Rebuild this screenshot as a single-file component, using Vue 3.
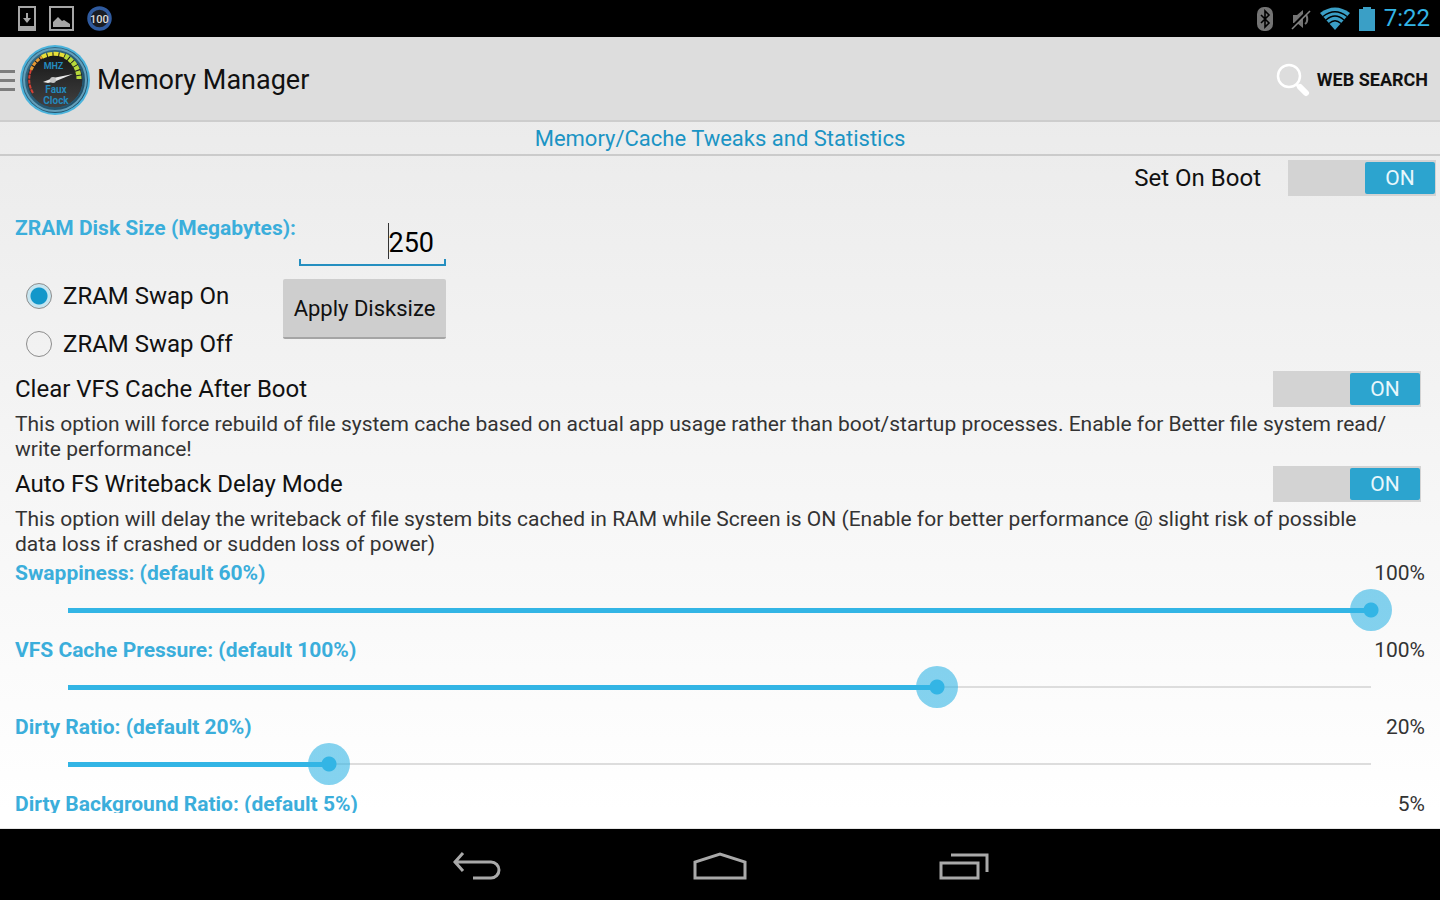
<script setup>
import { ref } from 'vue'

const setOnBoot = ref(true)
const diskSize = ref('250')
const zramSwap = ref('on')

// \u200b lets "read/write" break after the slash
const options = ref([
  {
    id: 'vfs-cache',
    title: 'Clear VFS Cache After Boot',
    enabled: true,
    text: 'This option will force rebuild of file system cache based on actual app usage rather than boot/startup processes. Enable for Better file system read/\u200bwrite performance!'
  },
  {
    id: 'writeback',
    title: 'Auto FS Writeback Delay Mode',
    enabled: true,
    text: 'This option will delay the writeback of file system bits cached in RAM while Screen is ON (Enable for better performance @ slight risk of possible data loss if crashed or sudden loss of power)'
  }
])

const sliders = ref([
  { id: 'swappiness', label: 'Swappiness: (default 60%)', value: 100, max: 100 },
  { id: 'pressure', label: 'VFS Cache Pressure: (default 100%)', value: 100, max: 150 },
  { id: 'dirty', label: 'Dirty Ratio: (default 20%)', value: 20, max: 100 }
])

// Fraction of the track that is filled, 0 to 1
const fillOf = (slider) => slider.value / slider.max
</script>

<template>
  <div class="screen">
    <header class="status-bar">
      <div class="status-group">
        <svg width="18" height="26" viewBox="0 0 18 26" fill="none" stroke="#a6a6a6">
          <path d="M1 1h16v23H1z" stroke-width="2" />
          <path d="M1 20h16v5H1z" fill="#a6a6a6" stroke="none" />
          <path d="M9 7v8" stroke-width="2" />
          <path d="M5 12h8l-4 5z" fill="#a6a6a6" stroke="none" />
        </svg>
        <svg width="25" height="25" viewBox="0 0 25 25">
          <path d="M1 1h23v23H1z" fill="none" stroke="#a6a6a6" stroke-width="2" />
          <path d="M4 21v-5l5-5 4 4 2-1 6 4v3z" fill="#a6a6a6" />
        </svg>
        <svg width="25" height="25" viewBox="0 0 25 25">
          <circle cx="12.5" cy="12.5" r="10.5" fill="#1a1d24" stroke="#2f5a9e" stroke-width="3.5" />
          <text x="12.5" y="17" class="battery-count">100</text>
        </svg>
      </div>
      <div class="status-group right">
        <svg class="bluetooth" width="16" height="24" viewBox="0 0 16 24">
          <rect width="16" height="24" rx="7" fill="#747474" />
          <path d="M4 8l8 8-4 4V4l4 4-8 8" fill="none" stroke="#000" stroke-width="1.6" />
        </svg>
        <svg width="20" height="22" viewBox="0 0 20 22">
          <path d="M2 7h4l6-5v18l-6-5H2z" fill="#747474" />
          <path d="M14 6c3 2 3 8 0 10" fill="none" stroke="#747474" stroke-width="2" />
          <path d="M0 20L17 3" stroke="#000" stroke-width="3" />
          <path d="M1 21L19 3" stroke="#858585" stroke-width="1.6" />
        </svg>
        <svg width="30" height="23" viewBox="0 0 30 23">
          <path d="M0 6Q15-5 30 6L15 23z" fill="#3a9fc6" />
          <path d="M3 9.500Q15 0 27 9.500M6 13Q15 5 24 13M9 16.500Q15 11 21 16.500" fill="none" stroke="#000" stroke-width="1.300" />
        </svg>
        <svg width="16" height="24" viewBox="0 0 16 24">
          <path d="M4 0h8v2h4v22H0V2h4z" fill="#3a9fc6" />
        </svg>
        <span class="clock">7:22</span>
      </div>
    </header>

    <div class="action-bar">
      <button class="home" aria-label="Open menu">
        <svg width="15" height="24" viewBox="0 0 15 24" stroke="#7d7d7d" stroke-width="3">
          <path d="M0 3.500h15M0 12.500h15M0 21.500h15" />
        </svg>
        <svg width="72" height="72" viewBox="0 0 72 72">
          <defs>
            <linearGradient id="dial" x1="0" y1="0" x2="0" y2="1">
              <stop offset="0" stop-color="#151515" />
              <stop offset="1" stop-color="#414141" />
            </linearGradient>
            <linearGradient id="rim" x1="0" y1="0" x2="1" y2="1">
              <stop offset="0" stop-color="#37708c" />
              <stop offset="1" stop-color="#1d4a62" />
            </linearGradient>
          </defs>
          <circle cx="36" cy="36" r="35" fill="#4ab3dc" />
          <circle cx="36" cy="36" r="33" fill="url(#rim)" />
          <circle cx="36" cy="36" r="31" fill="none" stroke="#639fba" stroke-width="2" />
          <circle cx="36" cy="36" r="28" fill="url(#dial)" stroke="#245c78" />
          <path d="M14 49A26 26 0 0 1 12 26" fill="none" stroke="#d44135" stroke-width="2" stroke-dasharray="4 1" />
          <path d="M12 26A26 26 0 0 1 23 13" fill="none" stroke="#e59835" stroke-width="3" stroke-dasharray="4 1" />
          <path d="M23 13A26 26 0 0 1 46 12" fill="none" stroke="#e8df38" stroke-width="4" stroke-dasharray="5 1" />
          <path d="M46 12A26 26 0 0 1 60 35" fill="none" stroke="#b7d93c" stroke-width="5" stroke-dasharray="4 1" />
          <text x="34.500" y="25" class="logo-unit">MHZ</text>
          <text x="37" y="49" class="logo-name">Faux</text>
          <text x="37" y="60" class="logo-name">Clock</text>
          <path d="M24 38l10-4 20-4-17 7-8 2z" fill="#e9e9e9" />
          <circle cx="34" cy="36" r="3" fill="#c4c4c4" />
        </svg>
      </button>
      <h1>Memory Manager</h1>
      <button class="web-search">
        <svg width="34" height="34" viewBox="0 0 34 34" fill="none" stroke="#fff">
          <circle cx="13" cy="13" r="11" stroke-width="2.500" />
          <path d="M20 21l3 3" stroke-width="3" />
          <path d="M24 24l6 6" stroke-width="6" stroke-linecap="round" />
        </svg>
        Web Search
      </button>
    </div>

    <h2>Memory/Cache Tweaks and Statistics</h2>

    <main>
      <div class="content">
        <div class="boot-row">
          <label for="set-on-boot">Set On Boot</label>
          <span class="switch">
            <input id="set-on-boot" v-model="setOnBoot" type="checkbox" role="switch">
            <span class="switch-text">{{ setOnBoot ? 'ON' : 'OFF' }}</span>
          </span>
        </div>

        <section class="zram">
          <div class="disk-size">
            <label class="caption" for="disk-size">ZRAM Disk Size (Megabytes):</label>
            <input id="disk-size" v-model="diskSize" type="text" inputmode="numeric">
          </div>
          <div class="swap">
            <div class="radios">
              <label><input v-model="zramSwap" type="radio" name="zram" value="on">ZRAM Swap On</label>
              <label><input v-model="zramSwap" type="radio" name="zram" value="off">ZRAM Swap Off</label>
            </div>
            <button class="apply">Apply Disksize</button>
          </div>
        </section>

        <section v-for="option in options" :key="option.id" class="option">
          <div class="option-head">
            <label :for="option.id">{{ option.title }}</label>
            <span class="switch">
              <input :id="option.id" v-model="option.enabled" type="checkbox" role="switch">
              <span class="switch-text">{{ option.enabled ? 'ON' : 'OFF' }}</span>
            </span>
          </div>
          <p>{{ option.text }}</p>
        </section>

        <div class="sliders">
          <section v-for="slider in sliders" :key="slider.id" class="slider">
            <div class="slider-head">
              <label class="caption" :for="slider.id">{{ slider.label }}</label>
              <output :for="slider.id">{{ slider.value }}%</output>
            </div>
            <input
              :id="slider.id"
              v-model.number="slider.value"
              type="range"
              min="0"
              :max="slider.max"
              :style="{ '--fill': fillOf(slider) }"
            >
          </section>

          <div class="slider-head">
            <span class="caption">Dirty Background Ratio: (default 5%)</span>
            <output>5%</output>
          </div>
        </div>
      </div>
    </main>

    <nav class="nav-bar">
      <button aria-label="Back">
        <svg width="50" height="30" viewBox="0 0 50 30" fill="none" stroke="#a9a9a9" stroke-width="3">
          <path d="M3 10h37a8 8 0 0 1 0 16H22M12 1L4 10l8 9" />
        </svg>
      </button>
      <button aria-label="Home">
        <svg width="54" height="30" viewBox="0 0 54 30" fill="none" stroke="#a9a9a9" stroke-width="3">
          <path d="M2 26V10L27 2l25 8v16z" />
        </svg>
      </button>
      <button aria-label="Recent apps">
        <svg width="50" height="30" viewBox="0 0 50 30" fill="none" stroke="#a9a9a9" stroke-width="3">
          <path d="M2 11h37v15H2zM12 3h36v17" />
        </svg>
      </button>
    </nav>
  </div>
</template>

<style>
body {
  margin: 0;
}
</style>

<style scoped>
.screen {
  display: flex;
  flex-direction: column;
  height: 100vh;
  font-family: Roboto, sans-serif;
  font-size: 24px;
  color: #111;
  background: linear-gradient(#e8e8e8, #fff 90%);
}

button {
  padding: 0;
  border: 0;
  background: none;
  font: inherit;
  color: inherit;
  cursor: pointer;
}

svg {
  display: block;
  flex: none;
}

.status-bar {
  display: flex;
  flex: none;
  align-items: center;
  justify-content: space-between;
  height: 37px;
  padding: 0 10px 0 18px;
  background: #000;
}

.status-group {
  display: flex;
  align-items: center;
  gap: 13px;
}

.status-group.right {
  gap: 9px;
}

.bluetooth {
  margin-right: 9px;
}

.battery-count {
  font-size: 11px;
  font-weight: 500;
  text-anchor: middle;
  fill: #ddd;
}

.clock {
  font-size: 24px;
  line-height: 37px;
  color: #33b5e5;
}

.action-bar {
  display: flex;
  flex: none;
  align-items: center;
  box-sizing: border-box;
  height: 85px;
  padding: 2px 12px 0 0;
  border-bottom: 2px solid #cdcdcd;
  background: #ddd;
}

.home {
  display: flex;
  align-items: center;
  gap: 4px;
}

.logo-unit {
  font-size: 9px;
  font-weight: 700;
  text-anchor: middle;
  fill: #2489bd;
}

.logo-name {
  font-size: 10px;
  font-weight: 700;
  text-anchor: middle;
  fill: #2489bd;
}

h1 {
  flex: 1;
  margin: 0 0 0 6px;
  font-size: 27px;
  font-weight: 400;
}

.web-search {
  display: flex;
  align-items: center;
  gap: 7px;
  font-size: 18px;
  font-weight: 700;
  text-transform: uppercase;
}

h2 {
  flex: none;
  margin: 0;
  padding-top: 2px;
  border-bottom: 2px solid #cbcbcb;
  font-size: 22px;
  font-weight: 400;
  line-height: 30px;
  text-align: center;
  color: #1b94c4;
}

main {
  flex: 1;
  display: flex;
  min-height: 0;
  padding-bottom: 15px;
}

.content {
  flex: 1;
  overflow: hidden;
}

.boot-row {
  display: flex;
  align-items: center;
  justify-content: flex-end;
  gap: 27px;
  height: 44px;
  padding-right: 4px;
}

.switch {
  display: grid;
  grid-template-columns: 1fr 71px;
  width: 148px;
  height: 36px;
}

.switch input {
  grid-area: 1 / 1 / 2 / 3;
  width: 100%;
  height: 100%;
  margin: 0;
  appearance: none;
  background: #d3d3d3;
  cursor: pointer;
}

.switch-text {
  grid-area: 1 / 2;
  margin: 2px 1px 2px 0;
  border-radius: 2px;
  font-size: 21px;
  line-height: 32px;
  text-align: center;
  color: #e8f7fc;
  background: #2ca4cf;
  pointer-events: none;
}

.switch input:not(:checked) + .switch-text {
  grid-area: 1 / 1;
  color: #fff;
  background: #999;
}

.caption {
  font-size: 21px;
  font-weight: 700;
  line-height: 26px;
  white-space: nowrap;
  color: #3baedb;
}

.zram {
  width: 431px;
  padding: 15px 15px 0;
}

.disk-size {
  display: flex;
  justify-content: space-between;
  height: 64px;
}

.disk-size input {
  flex: none;
  box-sizing: border-box;
  width: 147px;
  height: 51px;
  padding: 4px 12px 0 0;
  border: 0;
  outline: 0;
  font: 27px Roboto, sans-serif;
  text-align: right;
  /* cursor, then the bracket-shaped underline */
  background:
    linear-gradient(#333, #333) 89px 8px / 1px 36px no-repeat,
    linear-gradient(#258fc0, #258fc0) bottom / 100% 2px no-repeat,
    linear-gradient(#258fc0, #258fc0) left bottom / 2px 7px no-repeat,
    linear-gradient(#258fc0, #258fc0) right bottom / 2px 7px no-repeat;
}

.swap {
  display: flex;
  align-items: flex-start;
  justify-content: space-between;
  height: 88px;
}

.radios label {
  display: flex;
  align-items: center;
  gap: 11px;
  height: 48px;
  padding-left: 11px;
}

.radios {
  margin-top: -7px;
}

.radios input {
  width: 26px;
  height: 26px;
  margin: 0;
  appearance: none;
  border: 1px solid #8c8c8c;
  border-radius: 50%;
}

.radios input:checked {
  background: radial-gradient(circle, #1297ca 8px, #c6e5f0 9px);
}

.apply {
  width: 163px;
  height: 60px;
  border-bottom: 2px solid #a5a5a5;
  border-radius: 2px;
  font-size: 22px;
  background: #cecece;
}

.option {
  padding: 0 15px;
}

.option-head {
  display: flex;
  align-items: center;
  justify-content: space-between;
  height: 44px;
  padding-right: 4px;
}

.option p {
  margin: 0 25px 0 0;
  padding-top: 1px;
  font-size: 21px;
  line-height: 25px;
  color: #333;
}

.sliders {
  padding-top: 3px;
}

.slider-head {
  display: flex;
  justify-content: space-between;
  padding: 0 15px;
}

output {
  font-size: 21px;
  line-height: 26px;
  color: #333;
}

.slider {
  display: flex;
  flex-direction: column;
  height: 77px;
}

.slider input {
  height: 42px;
  margin: 3px 48px 0 47px;
  appearance: none;
  background:
    linear-gradient(#33b5e5, #33b5e5) 21px 50% / calc((100% - 42px) * var(--fill)) 5px no-repeat,
    linear-gradient(#ddd, #ddd) 50% 50% / calc(100% - 42px) 2px no-repeat;
}

.slider input::-webkit-slider-thumb {
  width: 42px;
  height: 42px;
  appearance: none;
  border-radius: 50%;
  background: radial-gradient(circle, #33b5e5 7px, rgba(51, 181, 229, 0.6) 8px);
}

.nav-bar {
  display: flex;
  flex: none;
  align-items: center;
  justify-content: center;
  gap: 192px;
  height: 72px;
  border-top: 1px solid #e6e6e6;
  box-sizing: border-box;
  padding-top: 4px;
  background: #000;
}
</style>
